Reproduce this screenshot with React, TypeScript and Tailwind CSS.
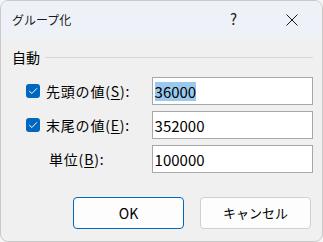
const jp = "font-['Segoe_UI','Noto_Sans_CJK_JP',sans-serif]";

function Check() {
  return (
    <span className="flex h-[14px] w-[14px] shrink-0 items-center justify-center rounded-[3px] bg-[#0067c0]">
      <svg width="10" height="10" viewBox="0 0 10 10" fill="none">
        <path d="M1.5 5.3 L3.9 7.5 L8.6 2.6" stroke="white" strokeWidth="1" strokeLinecap="round" strokeLinejoin="round" />
      </svg>
    </span>
  );
}

function Field({ value, selected }: { value: string; selected?: boolean }) {
  return (
    <div className="flex h-[28px] w-[162px] items-center border border-[#a8a8a8] bg-white pl-[2px] text-[15px] text-black">
      <span className={selected ? "bg-[#99c9ef] leading-[19px]" : "leading-[19px]"}>{value}</span>
    </div>
  );
}

export default function App() {
  const rows = [
    { label: "先頭の値", key: "S", value: "36000", checked: true, selected: true },
    { label: "末尾の値", key: "E", value: "352000", checked: true },
    { label: "単位", key: "B", value: "100000", checked: false },
  ];

  return (
    <div className={`h-[242px] w-[323px] bg-[#f6f6f6] ${jp}`}>
      <div className="flex h-full flex-col overflow-hidden rounded-[8px] border border-[#c9c9c9] bg-[#f0f0f0]">
        <div className="flex h-[37px] shrink-0 items-center bg-[#eef2f8] pl-[11px] text-[12px] text-[#1a1a1a]">
          <span>グループ化</span>
          <span className="ml-auto mr-[49px] text-[15px]">?</span>
          <svg className="mr-[24px]" width="12" height="12" viewBox="0 0 12 12">
            <path d="M0.5 0.5 L11.5 11.5 M11.5 0.5 L0.5 11.5" stroke="#1a1a1a" strokeWidth="1" />
          </svg>
        </div>

        <div className="flex flex-1 flex-col pl-[11px] pr-[9px] pt-[12px]">
          <div className="flex h-[14px] items-center gap-[5px] text-[14px] text-black">
            <span>自動</span>
            <div className="h-px flex-1 bg-[#d9d9d9]" />
          </div>

          <div className="mt-[13px] flex flex-col gap-[6px]">
            {rows.map((r) => (
              <div key={r.key} className="flex items-center">
                <div className={`flex w-[140px] items-center gap-[6px] text-[14px] tracking-[0.8px] text-black ${r.checked ? "pl-[14px]" : "pl-[37px]"}`}>
                  {r.checked && <Check />}
                  <span>
                    {r.label}(<span className="underline underline-offset-2">{r.key}</span>):
                  </span>
                </div>
                <Field value={r.value} selected={r.selected} />
              </div>
            ))}
          </div>

          <div className="mt-[24px] flex justify-end gap-[16px] pr-[2px]">
            <button className="h-[32px] w-[111px] rounded-[4px] border border-[#0067c0] bg-[#fdfdfd] text-[14px] text-black">
              OK
            </button>
            <button className="h-[32px] w-[111px] rounded-[4px] border border-[#d0d0d0] bg-[#fdfdfd] text-[13px] text-black">
              キャンセル
            </button>
          </div>
        </div>
      </div>
    </div>
  );
}
